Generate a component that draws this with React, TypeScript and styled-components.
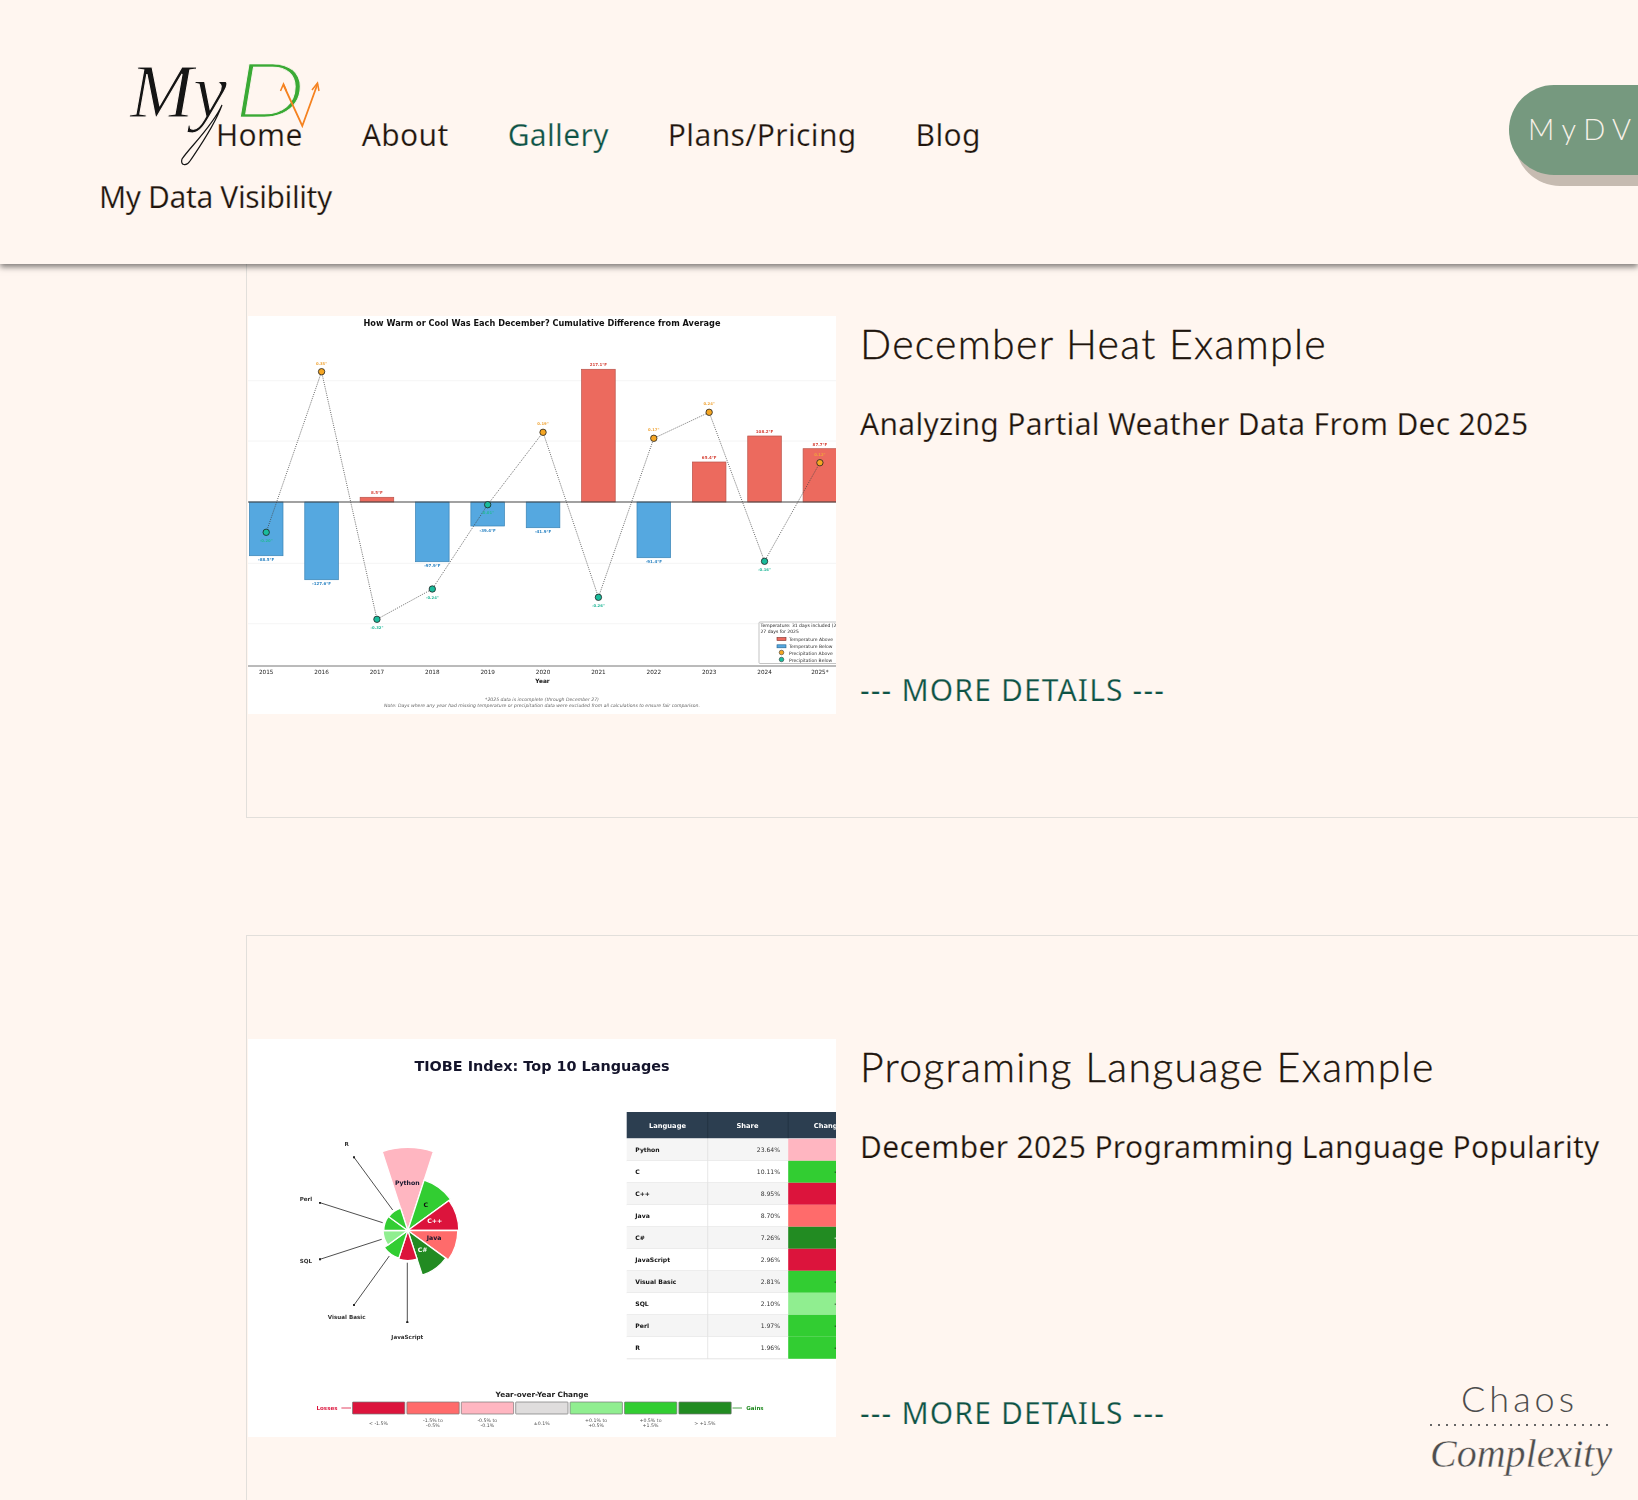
import { createGlobalStyle, styled } from 'styled-components';

const CHART_FONT = '"DejaVu Sans", sans-serif';

const GlobalStyle = createGlobalStyle`
  html, body {
    margin: 0;
    padding: 0;
    background: #fff6f0;
  }
`;

const decemberData = [
  { year: '2015', barY: 239.7, pointY: 216.3, temp: '-88.5°F', rain: '-0.20"' },
  { year: '2016', barY: 263.7, pointY: 55.7, temp: '-127.6°F', rain: '0.35"' },
  { year: '2017', barY: 181.3, pointY: 303.3, temp: '8.5°F', rain: '-0.32"' },
  { year: '2018', barY: 245.7, pointY: 273, temp: '-97.9°F', rain: '-0.24"' },
  { year: '2019', barY: 210, pointY: 188.7, temp: '-39.4°F', rain: '-0.01"' },
  { year: '2020', barY: 211.7, pointY: 116.3, temp: '-41.9°F', rain: '0.19"' },
  { year: '2021', barY: 53.3, pointY: 281.3, temp: '217.1°F', rain: '-0.26"' },
  { year: '2022', barY: 241.7, pointY: 122.3, temp: '-91.4°F', rain: '0.17"' },
  { year: '2023', barY: 146, pointY: 96.3, temp: '65.4°F', rain: '0.24"' },
  { year: '2024', barY: 120, pointY: 245.3, temp: '108.2°F', rain: '-0.16"' },
  { year: '2025*', barY: 132.7, pointY: 146.7, temp: '87.7°F', rain: '0.12"' },
];

const languages = [
  { name: 'Python', share: '23.64%', change: '-0.32%', color: '#ffb6c1', r: 83 },
  { name: 'C', share: '10.11%', change: '+1.12%', color: '#32cd32', r: 53 },
  { name: 'C++', share: '8.95%', change: '-1.87%', color: '#dc143c', r: 51 },
  { name: 'Java', share: '8.70%', change: '-0.75%', color: '#ff6b6b', r: 50 },
  { name: 'C#', share: '7.26%', change: '+2.39%', color: '#228b22', r: 47 },
  { name: 'JavaScript', share: '2.96%', change: '-1.60%', color: '#dc143c', r: 30 },
  { name: 'Visual Basic', share: '2.81%', change: '+0.85%', color: '#32cd32', r: 29 },
  { name: 'SQL', share: '2.10%', change: '+0.11%', color: '#90ee90', r: 24.7 },
  { name: 'Perl', share: '1.97%', change: '+0.64%', color: '#32cd32', r: 24 },
  { name: 'R', share: '1.96%', change: '+0.68%', color: '#32cd32', r: 23.5 },
];

const scaleItems = [
  { color: '#dc143c', lines: ['< -1.5%'] },
  { color: '#ff6b6b', lines: ['-1.5% to', '-0.5%'] },
  { color: '#ffb6c1', lines: ['-0.5% to', '-0.1%'] },
  { color: '#dfdddd', lines: ['±0.1%'] },
  { color: '#90ee90', lines: ['+0.1% to', '+0.5%'] },
  { color: '#32cd32', lines: ['+0.5% to', '+1.5%'] },
  { color: '#228b22', lines: ['> +1.5%'] },
];

const leaders = [
  { x1: 144.7, y1: 171, x2: 106, y2: 118.3, tx: 98.7, ty: 105.3, label: 'R' },
  { x1: 134.7, y1: 183.7, x2: 72, y2: 163.7, tx: 58, ty: 160.3, label: 'Perl' },
  { x1: 133.7, y1: 200.3, x2: 72, y2: 220.3, tx: 58, ty: 222.3, label: 'SQL' },
  { x1: 141.3, y1: 217, x2: 106, y2: 266, tx: 98.7, ty: 277.7, label: 'Visual Basic' },
  { x1: 159.3, y1: 223.7, x2: 159.3, y2: 283.3, tx: 159.3, ty: 297.7, label: 'JavaScript' },
];

const wedgeLabels = [
  { x: 159.3, y: 146, label: 'Python', fill: '#14142b' },
  { x: 177.7, y: 168, label: 'C', fill: '#111' },
  { x: 186.7, y: 183.7, label: 'C++', fill: '#fff' },
  { x: 186, y: 201.3, label: 'Java', fill: '#14142b' },
  { x: 174.7, y: 213.3, label: 'C#', fill: '#fff' },
];

const wedgePath = (cx: number, cy: number, r: number, from: number, to: number) => {
  const point = (deg: number) => {
    const rad = (deg * Math.PI) / 180;
    return `${(cx + r * Math.sin(rad)).toFixed(2)} ${(cy - r * Math.cos(rad)).toFixed(2)}`;
  };
  return `M${cx} ${cy}L${point(from)}A${r} ${r} 0 0 1 ${point(to)}Z`;
};

const DecemberChart = () => {
  const baseline = 186;
  const columnX = (i: number) => 18.2 + 55.37 * i;
  const line = decemberData.map((d, i) => `${columnX(i)},${d.pointY}`).join(' ');

  return (
    <ChartFrame viewBox="0 0 588 398">
      <rect width="588" height="398" fill="#fff" />
      {[64.7, 125, 247.3, 307.7].map((y) => (
        <line key={y} x1="0" x2="588" y1={y} y2={y} stroke="#f1f1f1" strokeWidth="0.8" />
      ))}
      <ChartText x="294" y="10" fontSize="8.2" fontWeight="700" textAnchor="middle" fill="#111">
        How Warm or Cool Was Each December? Cumulative Difference from Average
      </ChartText>
      {decemberData.map((d, i) => {
        const warm = d.barY < baseline;
        const x = columnX(i);
        return (
          <g key={d.year}>
            <rect
              x={x - 16.8}
              y={warm ? d.barY : baseline}
              width="33.6"
              height={Math.abs(d.barY - baseline)}
              fill={warm ? '#ec6a5e' : '#55a8e0'}
              stroke={warm ? '#b9544b' : '#3a83b5'}
              strokeWidth="0.7"
            />
            <ChartText
              x={x}
              y={warm ? d.barY - 3 : d.barY + 5.5}
              fontSize="4"
              fontWeight="700"
              textAnchor="middle"
              fill={warm ? '#d6453a' : '#2f86c4'}
            >
              {d.temp}
            </ChartText>
            <ChartText x={x} y="357.5" fontSize="5.7" textAnchor="middle" fill="#222">
              {d.year}
            </ChartText>
          </g>
        );
      })}
      <line x1="0" x2="588" y1={baseline} y2={baseline} stroke="#444" strokeWidth="1.1" />
      <polyline points={line} fill="none" stroke="#444" strokeWidth="0.8" strokeDasharray="1 1.2" />
      {decemberData.map((d, i) => {
        const wet = !d.rain.startsWith('-');
        const x = columnX(i);
        return (
          <g key={d.year}>
            <circle cx={x} cy={d.pointY} r="3.2" fill={wet ? '#f5a623' : '#1abc9c'} stroke="#222" strokeWidth="0.8" />
            <ChartText
              x={x}
              y={wet ? d.pointY - 7 : d.pointY + 9.5}
              fontSize="3.8"
              fontWeight="700"
              textAnchor="middle"
              fill={wet ? '#f0a63a' : '#26b99a'}
            >
              {d.rain}
            </ChartText>
          </g>
        );
      })}
      <line x1="0" x2="588" y1="350" y2="350" stroke="#666" strokeWidth="0.9" />
      <ChartText x="294.5" y="366.5" fontSize="5.8" fontWeight="700" textAnchor="middle" fill="#111">
        Year
      </ChartText>
      <ChartText x="294" y="385" fontSize="4.6" fontStyle="italic" textAnchor="middle" fill="#666">
        *2025 data is incomplete (through December 27)
      </ChartText>
      <ChartText x="294" y="390.5" fontSize="4.6" fontStyle="italic" textAnchor="middle" fill="#666">
        Note: Days where any year had missing temperature or precipitation data were excluded from all calculations to ensure fair comparison.
      </ChartText>
      <rect x="511" y="306" width="90" height="41.5" rx="1" fill="#fff" stroke="#aaa" strokeWidth="0.7" />
      <ChartText x="512.5" y="311" fontSize="4.5" fill="#222">
        Temperature: 31 days included (2
      </ChartText>
      <ChartText x="512.5" y="316.8" fontSize="4.5" fill="#222">
        27 days for 2025
      </ChartText>
      <rect x="529" y="321.5" width="9" height="3" fill="#ec6a5e" stroke="#7d2a24" strokeWidth="0.6" />
      <ChartText x="541" y="324.6" fontSize="4.5" fill="#333">Temperature Above</ChartText>
      <rect x="529" y="328.8" width="9" height="3" fill="#55a8e0" stroke="#1f5f8c" strokeWidth="0.6" />
      <ChartText x="541" y="331.9" fontSize="4.5" fill="#333">Temperature Below</ChartText>
      <circle cx="533.5" cy="336.5" r="2.3" fill="#f5a623" stroke="#222" strokeWidth="0.5" />
      <ChartText x="541" y="338.9" fontSize="4.5" fill="#333">Precipitation Above</ChartText>
      <circle cx="533.5" cy="343.5" r="2.3" fill="#1abc9c" stroke="#222" strokeWidth="0.5" />
      <ChartText x="541" y="345.7" fontSize="4.5" fill="#333">Precipitation Below</ChartText>
    </ChartFrame>
  );
};

const LanguageChart = () => {
  const cx = 159.8;
  const cy = 191.5;
  const tableX = [378.7, 459.7, 540.2];

  return (
    <ChartFrame viewBox="0 0 588 398">
      <defs>
        <marker id="dot" viewBox="0 0 4 4" refX="2" refY="2" markerWidth="3" markerHeight="3">
          <circle cx="2" cy="2" r="2" fill="#222" />
        </marker>
      </defs>
      <rect width="588" height="398" fill="#fff" />
      <ChartText x="294" y="32" fontSize="14.4" fontWeight="700" textAnchor="middle" fill="#14142b">
        TIOBE Index: Top 10 Languages
      </ChartText>

      {languages.map((lang, i) => (
        <path
          key={lang.name}
          d={wedgePath(cx, cy, lang.r, i * 36 - 18, i * 36 + 18)}
          fill={lang.color}
          stroke="#fff"
          strokeWidth="1.3"
        />
      ))}
      {wedgeLabels.map((w) => (
        <ChartText key={w.label} x={w.x} y={w.y} fontSize="6.2" fontWeight="700" textAnchor="middle" fill={w.fill}>
          {w.label}
        </ChartText>
      ))}
      {leaders.map((l) => (
        <g key={l.label}>
          <line x1={l.x1} y1={l.y1} x2={l.x2} y2={l.y2} stroke="#222" strokeWidth="0.8" markerEnd="url(#dot)" />
          <ChartText x={l.tx} y={l.ty + 2} fontSize="5.6" fontWeight="700" textAnchor="middle" fill="#333">
            {l.label}
          </ChartText>
        </g>
      ))}

      <rect x={tableX[0]} y="73" width="210" height="26.3" fill="#2c3e50" />
      <line x1={tableX[1]} x2={tableX[1]} y1="73" y2="99.3" stroke="#1f2d3a" strokeWidth="0.6" />
      <line x1={tableX[2]} x2={tableX[2]} y1="73" y2="99.3" stroke="#1f2d3a" strokeWidth="0.6" />
      <ChartText x="419.5" y="88.5" fontSize="6.7" fontWeight="700" textAnchor="middle" fill="#fff">Language</ChartText>
      <ChartText x="499.5" y="88.5" fontSize="6.7" fontWeight="700" textAnchor="middle" fill="#fff">Share</ChartText>
      <ChartText x="580" y="88.5" fontSize="6.7" fontWeight="700" textAnchor="middle" fill="#fff">Change</ChartText>
      {languages.map((lang, i) => {
        const y = 99.8 + 22 * i;
        return (
          <g key={lang.name}>
            <rect x={tableX[0]} y={y} width="162" height="22" fill={i % 2 === 0 ? '#f5f5f5' : '#fff'} />
            <rect x={tableX[2]} y={y} width="70" height="22" fill={lang.color} />
            <line x1={tableX[0]} x2={tableX[2]} y1={y + 22} y2={y + 22} stroke="#d9d9d9" strokeWidth="0.7" />
            <line x1={tableX[1]} x2={tableX[1]} y1={y} y2={y + 22} stroke="#d9d9d9" strokeWidth="0.6" />
            <ChartText x="387.3" y={y + 13} fontSize="6.1" fontWeight="700" fill="#111">
              {lang.name}
            </ChartText>
            <ChartText x="532" y={y + 13} fontSize="6.1" textAnchor="end" fill="#333">
              {lang.share}
            </ChartText>
            <ChartText x="586" y={y + 13} fontSize="6.1" fontWeight="700" fill={lang.color === '#228b22' ? '#fff' : '#111'}>
              {lang.change.startsWith('+') ? lang.change : ''}
            </ChartText>
          </g>
        );
      })}

      <ChartText x="294" y="358" fontSize="7.3" fontWeight="700" textAnchor="middle" fill="#222">
        Year-over-Year Change
      </ChartText>
      <ChartText x="79" y="371" fontSize="5.5" fontWeight="700" textAnchor="middle" fill="#dc143c">Losses</ChartText>
      <line x1="93.4" x2="103" y1="369" y2="369" stroke="#dc143c" strokeWidth="0.8" />
      <ChartText x="507" y="371" fontSize="5.5" fontWeight="700" textAnchor="middle" fill="#228b22">Gains</ChartText>
      <line x1="484.5" x2="494" y1="369" y2="369" stroke="#228b22" strokeWidth="0.8" />
      {scaleItems.map((item, i) => {
        const x = 104.5 + 54.4 * i;
        return (
          <g key={item.color}>
            <rect x={x} y="363" width="52.3" height="12" rx="0.6" fill={item.color} stroke="#777" strokeWidth="0.7" />
            {item.lines.map((text, j) => (
              <ChartText
                key={text}
                x={x + 26}
                y={item.lines.length === 1 ? 385.5 : 383 + j * 4.8}
                fontSize="4.7"
                textAnchor="middle"
                fill="#555"
              >
                {text}
              </ChartText>
            ))}
          </g>
        );
      })}
    </ChartFrame>
  );
};

const App = () => {
  return (
    <Page>
      <GlobalStyle />
      <Header>
        <Brand>
          <BrandName>My Data Visibility</BrandName>
        </Brand>
        <Nav>
          <NavItem>Home</NavItem>
          <NavItem>About</NavItem>
          <NavItem $active>Gallery</NavItem>
          <NavItem>Plans/Pricing</NavItem>
          <NavItem>Blog</NavItem>
        </Nav>
        <Logo viewBox="0 0 210 120">
          <LogoScript x="10" y="62" fontSize="76" fill="#151515">My</LogoScript>
          <path d="M102 50C92 72 70 92 62 104C60 110 66 112 70 106C78 94 94 72 102 50" fill="none" stroke="#151515" strokeWidth="1.2" />
          <LogoLetter x="0" y="0" fontSize="74" fill="#3aaa35" transform="translate(114 62) scale(1.36 1)">D</LogoLetter>
          <polyline points="163.5,30 182.3,71 197.5,29" fill="none" stroke="#f58220" strokeWidth="1.8" />
          <polyline points="160.5,36 163.5,29 166.5,36" fill="none" stroke="#f58220" strokeWidth="1.5" />
          <polyline points="192,35 197.5,28 199,36" fill="none" stroke="#f58220" strokeWidth="1.5" />
        </Logo>
        <HeaderButton>M y D V</HeaderButton>
      </Header>

      <Main>
        <Card>
          <ChartImage>
            <DecemberChart />
          </ChartImage>
          <CardText>
            <CardTitle>December Heat Example</CardTitle>
            <CardSubtitle>Analyzing Partial Weather Data From Dec 2025</CardSubtitle>
            <MoreLink>--- MORE DETAILS ---</MoreLink>
          </CardText>
        </Card>
        <Card>
          <ChartImage>
            <LanguageChart />
          </ChartImage>
          <CardText>
            <CardTitle>Programing Language Example</CardTitle>
            <CardSubtitle>December 2025 Programming Language Popularity</CardSubtitle>
            <MoreLink>--- MORE DETAILS ---</MoreLink>
          </CardText>
        </Card>
      </Main>

      <ChaosBadge>
        <ChaosWord>Chaos</ChaosWord>
        <ChaosDots />
        <ComplexityWord>Complexity</ComplexityWord>
      </ChaosBadge>
    </Page>
  );
};

const Page = styled.div`
  position: relative;
  width: 1638px;
  height: 1500px;
  overflow: hidden;
  background: #fff6f0;
  color: #20140c;
  font-family: 'Lato', sans-serif;
`;

const Header = styled.header`
  position: absolute;
  top: 0;
  left: 0;
  right: 0;
  z-index: 2;
  display: flex;
  height: 264px;
  padding-left: 99px;
  box-sizing: border-box;
  background: #fff6f0;
  box-shadow: 0 3px 6px rgba(0, 0, 0, 0.5);
`;

const Brand = styled.div`
  width: 117px;
  padding-top: 176px;
`;

const BrandName = styled.div`
  font-family: 'Noto Sans', sans-serif;
  font-size: 30px;
  letter-spacing: -0.4px;
  line-height: 42px;
  white-space: nowrap;
  -webkit-text-stroke: 0.25px #fff6f0;
`;

const Nav = styled.nav`
  display: flex;
  gap: 59px;
  padding-top: 114px;
`;

const NavItem = styled.a<{ $active?: boolean }>`
  font-family: 'Noto Sans', sans-serif;
  font-size: 30px;
  letter-spacing: 0.35px;
  line-height: 42px;
  color: ${(p) => (p.$active ? '#0e5345' : '#20140c')};
  -webkit-text-stroke: 0.25px #fff6f0;
`;

const Logo = styled.svg`
  position: absolute;
  top: 55px;
  left: 120px;
  width: 210px;
  height: 120px;
  overflow: visible;
`;

const LogoScript = styled.text`
  font-family: 'Liberation Serif', serif;
  font-style: italic;
  stroke: #fff6f0;
  stroke-width: 1.1px;
`;

const LogoLetter = styled.text`
  font-family: 'Lato', sans-serif;
  font-style: italic;
  font-weight: 300;
  stroke: #fff6f0;
  stroke-width: 0.7px;
`;

const HeaderButton = styled.div`
  position: absolute;
  top: 85px;
  left: 1509px;
  width: 200px;
  height: 90px;
  padding-left: 19px;
  box-sizing: border-box;
  border-radius: 45px;
  background: #76997f;
  box-shadow: 6px 11px 0 #c6bbb1;
  color: #f8f1e8;
  font-size: 29px;
  font-weight: 300;
  line-height: 88px;
  white-space: nowrap;
`;

const Main = styled.main`
  display: flex;
  flex-direction: column;
  gap: 117px;
  padding: 212px 0 0 246px;
`;

const Card = styled.section`
  display: flex;
  flex-shrink: 0;
  width: 1500px;
  height: 606px;
  padding: 103px 0 0 1px;
  box-sizing: border-box;
  border: 1px solid #e2dfdb;
`;

const ChartImage = styled.div`
  flex-shrink: 0;
  width: 588px;
  height: 398px;
`;

const ChartFrame = styled.svg`
  display: block;
  width: 100%;
  height: 100%;
  filter: blur(0.3px);
`;

const ChartText = styled.text`
  font-family: ${CHART_FONT};
`;

const CardText = styled.div`
  display: flex;
  flex-direction: column;
  width: 770px;
  height: 398px;
  margin-left: 24px;
`;

const CardTitle = styled.h2`
  margin: 3px 0 0;
  font-size: 41px;
  font-weight: 300;
  letter-spacing: 1.3px;
  line-height: 50px;
  -webkit-text-stroke: 0.35px #20140c;
`;

const CardSubtitle = styled.p`
  margin: 35px 0 0;
  font-family: 'Noto Sans', sans-serif;
  font-size: 30px;
  letter-spacing: 0.3px;
  line-height: 40px;
  -webkit-text-stroke: 0.25px #fff6f0;
`;

const MoreLink = styled.a`
  margin-top: auto;
  padding-bottom: 4px;
  font-family: 'Noto Sans', sans-serif;
  font-size: 30px;
  letter-spacing: 1.15px;
  line-height: 40px;
  color: #0e5345;
  -webkit-text-stroke: 0.25px #fff6f0;
`;

const ChaosBadge = styled.div`
  position: absolute;
  top: 1377px;
  left: 1430px;
  z-index: 1;
  width: 180px;
  color: #4d4d4d;
`;

const ChaosWord = styled.div`
  padding-left: 31px;
  font-family: 'Lato', sans-serif;
  font-size: 36px;
  font-weight: 300;
  letter-spacing: 4px;
  line-height: 42px;
`;

const ChaosDots = styled.div`
  height: 2px;
  margin-top: 5px;
  background: repeating-linear-gradient(90deg, #666 0 2px, transparent 2px 8px);
`;

const ComplexityWord = styled.div`
  margin-top: 4px;
  font-family: 'Liberation Serif', serif;
  font-size: 40px;
  font-style: italic;
  line-height: 48px;
  white-space: nowrap;
  -webkit-text-stroke: 0.4px #fff6f0;
`;

export default App;
